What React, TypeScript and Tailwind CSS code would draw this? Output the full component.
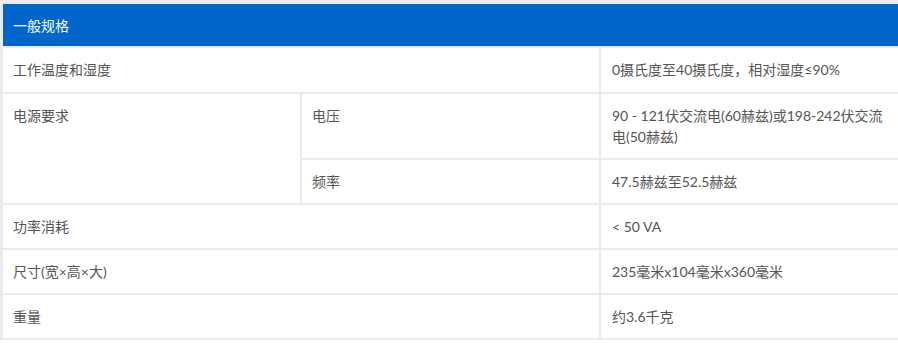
import React from "react";

const cell = "bg-white align-top px-[10px] py-[11px] leading-[21px]";

export default function App() {
  return (
    <div
      className="w-[898px] h-[343px] overflow-hidden bg-white text-[14px] text-[#555555]"
      style={{ fontFamily: "Lato, 'Noto Sans CJK SC', sans-serif" }}
    >
      <div className="inline-block bg-[#ebebeb] pl-px pt-[2px]">
        <table className="border-separate border-spacing-[2px] table-fixed w-[897px]">
          <colgroup>
            <col className="w-[297px]" />
            <col className="w-[297px]" />
            <col className="w-[297px]" />
          </colgroup>
          <tbody>
            <tr>
              <td colSpan={3} className="bg-[#0066cc] text-white h-[42px] px-[10px] leading-[21px] align-middle">
                一般规格
              </td>
            </tr>
            <tr>
              <td colSpan={2} className={cell + " h-[44px]"}>工作温度和湿度</td>
              <td className={cell + " pl-[11px]"}>0摄氏度至40摄氏度，相对湿度≤90%</td>
            </tr>
            <tr>
              <td rowSpan={2} className={cell}>电源要求</td>
              <td className={cell}>电压</td>
              <td className={cell + " pl-[11px]"}>90 - 121伏交流电(60赫兹)或198-242伏交流电(50赫兹)</td>
            </tr>
            <tr>
              <td className={cell}>频率</td>
              <td className={cell + " pl-[11px]"}>47.5赫兹至52.5赫兹</td>
            </tr>
            <tr>
              <td colSpan={2} className={cell}>功率消耗</td>
              <td className={cell + " pl-[11px]"}>&lt; 50 VA</td>
            </tr>
            <tr>
              <td colSpan={2} className={cell}>尺寸(宽×高×大)</td>
              <td className={cell + " pl-[11px]"}>235毫米x104毫米x360毫米</td>
            </tr>
            <tr>
              <td colSpan={2} className={cell}>重量</td>
              <td className={cell + " pl-[11px]"}>约3.6千克</td>
            </tr>
          </tbody>
        </table>
      </div>
    </div>
  );
}
